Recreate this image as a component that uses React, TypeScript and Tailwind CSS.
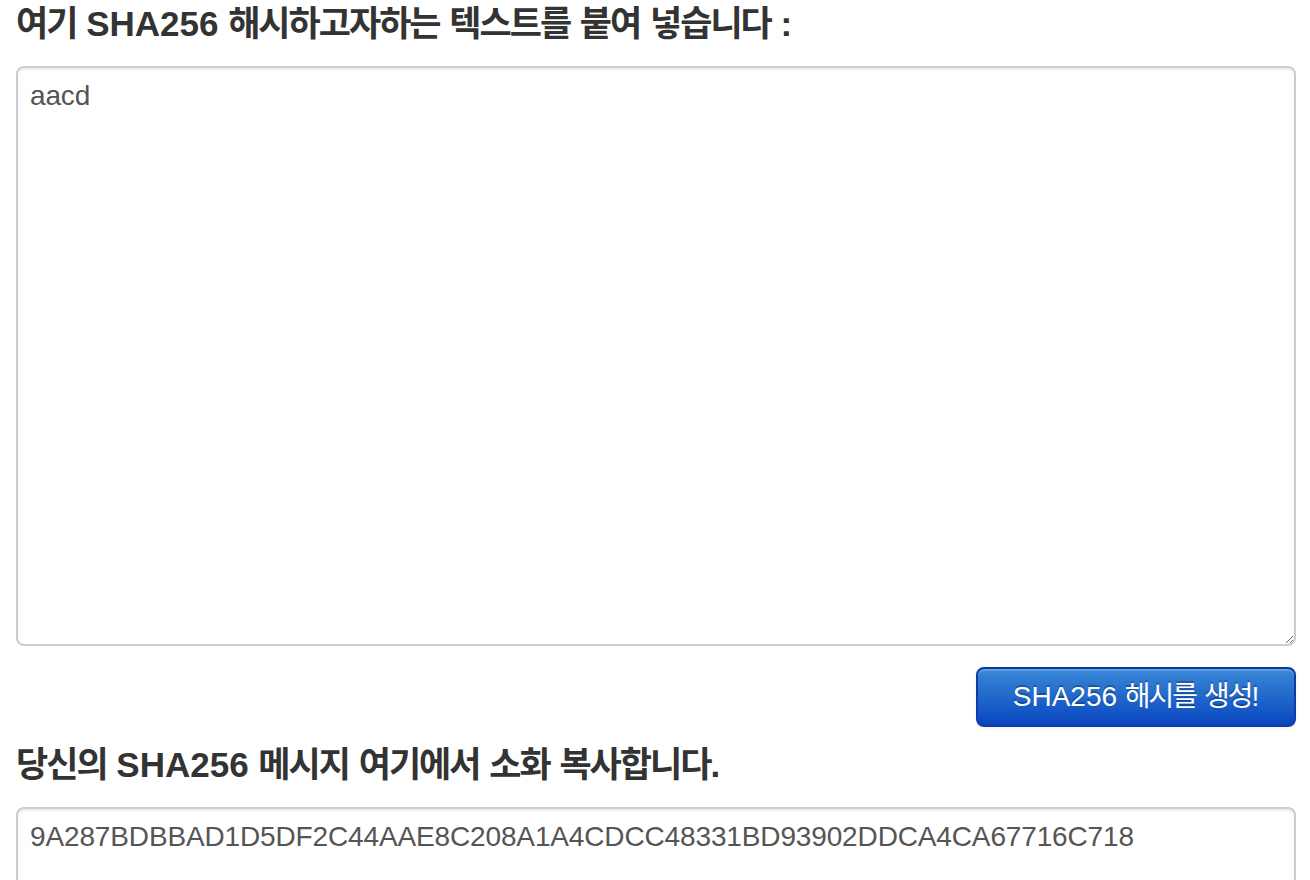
const hash = "9A287BDBBAD1D5DF2C44AAE8C208A1A4CDCC48331BD93902DDCA4CA67716C718";

function Ko({ children }: { children: React.ReactNode }) {
  // Hangul glyphs in the fallback CJK font run wider than the original
  return <span className="tracking-[-2px]">{children}</span>;
}

export default function App() {
  return (
    <div className="min-h-screen bg-white px-4 pt-[4px] font-['Liberation_Sans','Noto_Sans_CJK_KR',sans-serif] text-[#333]">
      <h4 className="mb-[22px] text-[35px] leading-[40px] font-bold">
        <Ko>여기</Ko> SHA256 <Ko>해시하고자하는</Ko> <Ko>텍스트를</Ko> <Ko>붙여</Ko> <Ko>넣습니다</Ko> :
      </h4>
      <textarea
        defaultValue="aacd"
        className="block h-[580px] w-[1280px] rounded-[8px] border-2 border-[#ccc] bg-white px-[12px] py-[8px] text-[28px] leading-[40px] tracking-[-0.14px] text-[#555] shadow-[inset_0_2px_2px_rgba(0,0,0,0.075)] outline-none"
      />

      <div className="mt-[21px] flex w-[1280px] justify-end">
        <button className="h-[60px] w-[320px] rounded-[8px] border-2 border-[#0b3da8] bg-linear-to-b from-[#3b88d7] to-[#0b44bf] text-[28px] leading-[40px] text-white shadow-[inset_0_2px_0_rgba(255,255,255,0.2),0_2px_4px_rgba(0,0,0,0.05)] [text-shadow:0_-2px_0_rgba(0,0,0,0.25)]">
          SHA256 <Ko>해시를</Ko> <Ko>생성</Ko>!
        </button>
      </div>

      <h4 className="mt-[18px] mb-[22px] text-[35px] leading-[40px] font-bold">
        <Ko>당신의</Ko> SHA256 <Ko>메시지</Ko> <Ko>여기에서</Ko> <Ko>소화</Ko> <Ko>복사합니다</Ko>.
      </h4>
      <textarea
        readOnly
        defaultValue={hash}
        className="block h-[200px] w-[1280px] rounded-[8px] border-2 border-[#ccc] bg-white px-[12px] py-[8px] text-[28px] leading-[40px] tracking-[-0.14px] text-[#555] shadow-[inset_0_2px_2px_rgba(0,0,0,0.075)] outline-none"
      />
    </div>
  );
}
